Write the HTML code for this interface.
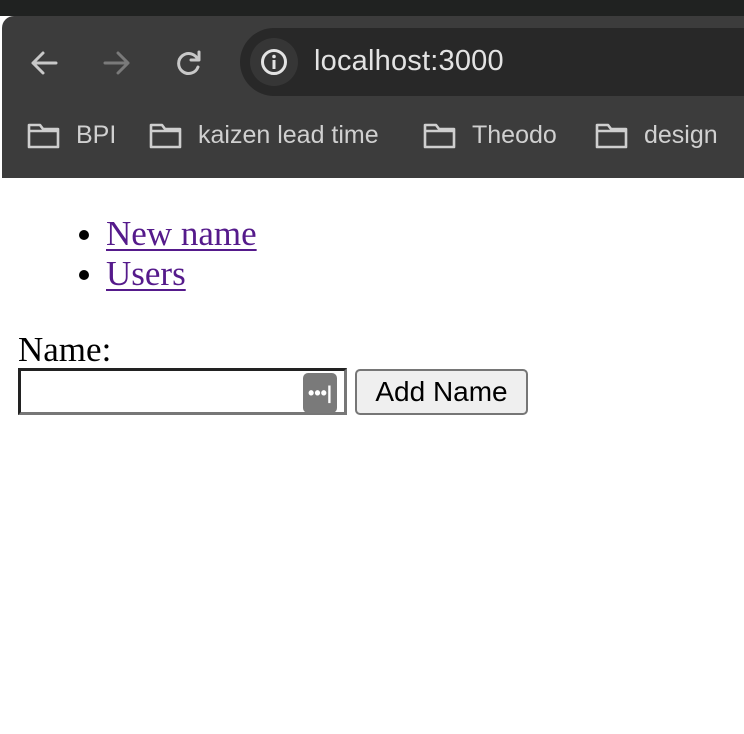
<!DOCTYPE html>
<html><head><meta charset="utf-8"><style>
*{margin:0;padding:0;box-sizing:border-box}
body{width:744px;height:734px;background:#fff;position:relative;overflow:hidden;font-family:"Liberation Serif",serif}
.top{position:absolute;left:0;top:0;width:744px;height:16px;background:#202221}
.bar{position:absolute;left:2px;top:16px;width:760px;height:162px;background:#3c3c3c;border-top-left-radius:12px}
.addr{position:absolute;left:240px;top:28px;width:600px;height:68px;background:#282828;border-radius:34px}
.info{position:absolute;left:250px;top:38px;width:48px;height:48px;border-radius:50%;background:#363636}
.url{position:absolute;left:314px;top:45px;font:29px "Liberation Sans",sans-serif;color:#e3e3e3;letter-spacing:0.2px}
.bm{position:absolute;top:121px;font:25px "Liberation Sans",sans-serif;color:#d0d0d0}
.f{position:absolute;top:122px}
ul{position:absolute;left:106px;top:214px;font-size:35px;line-height:40px}
li a{color:#551a8b;text-decoration:underline;text-decoration-thickness:2px;text-underline-offset:4px}
.lab{position:absolute;left:18px;top:330px;font-size:35px;line-height:40px}
.inp{position:absolute;left:18px;top:368px;width:329px;height:47px;border:3px solid;border-color:#222 #777 #777 #222;background:#fff}
.dots{position:absolute;left:282px;top:2px;width:34px;height:40px;background:#7a7a7a;border-radius:5px;color:#fff;font:bold 18px "Liberation Sans",sans-serif;text-align:center;line-height:40px}
.btn{position:absolute;left:355px;top:369px;width:173px;height:46px;border:2px solid #767676;border-radius:5px;background:#efefef;font:28px "Liberation Sans",sans-serif;text-align:center;line-height:42px;color:#000}
</style></head><body>
<div class="top"></div>
<div class="bar"></div>
<svg style="position:absolute;left:28px;top:46px" width="34" height="34" viewBox="0 0 34 34" fill="none" stroke="#c8c8c8" stroke-width="3" stroke-linecap="round" stroke-linejoin="round"><path d="M28 17H5M15 7L5 17l10 10"/></svg>
<svg style="position:absolute;left:99px;top:46px" width="34" height="34" viewBox="0 0 34 34" fill="none" stroke="#7a7a7a" stroke-width="3" stroke-linecap="round" stroke-linejoin="round"><path d="M6 17h23M19 7l10 10-10 10"/></svg>
<svg style="position:absolute;left:172px;top:46px" width="34" height="34" viewBox="0 0 34 34" fill="none" stroke="#c8c8c8" stroke-width="3" stroke-linecap="round" stroke-linejoin="round"><path d="M26 14A10 10 0 1 0 26 21"/><path d="M27 6v8h-8" /></svg>
<div class="addr"></div>
<div class="info"></div>
<svg style="position:absolute;left:260px;top:48px" width="28" height="28" viewBox="0 0 28 28"><circle cx="14" cy="14" r="11.5" fill="none" stroke="#e3e3e3" stroke-width="3"/><rect x="12.5" y="12" width="3" height="9" fill="#e3e3e3"/><circle cx="14" cy="8.5" r="1.8" fill="#e3e3e3"/></svg>
<div class="url">localhost:3000</div>
<svg class="f" style="left:27px" width="34" height="28" viewBox="0 0 34 28" fill="none" stroke="#cfcfcf" stroke-width="2.6" stroke-linejoin="round"><path d="M2 3h11l3 4h15v18H2z"/><path d="M2 9h29"/></svg>
<div class="bm" style="left:76px">BPI</div>
<svg class="f" style="left:149px" width="34" height="28" viewBox="0 0 34 28" fill="none" stroke="#cfcfcf" stroke-width="2.6" stroke-linejoin="round"><path d="M2 3h11l3 4h15v18H2z"/><path d="M2 9h29"/></svg>
<div class="bm" style="left:198px">kaizen lead time</div>
<svg class="f" style="left:423px" width="34" height="28" viewBox="0 0 34 28" fill="none" stroke="#cfcfcf" stroke-width="2.6" stroke-linejoin="round"><path d="M2 3h11l3 4h15v18H2z"/><path d="M2 9h29"/></svg>
<div class="bm" style="left:472px">Theodo</div>
<svg class="f" style="left:595px" width="34" height="28" viewBox="0 0 34 28" fill="none" stroke="#cfcfcf" stroke-width="2.6" stroke-linejoin="round"><path d="M2 3h11l3 4h15v18H2z"/><path d="M2 9h29"/></svg>
<div class="bm" style="left:644px">design</div>
<ul><li><a>New name</a></li><li><a>Users</a></li></ul>
<div class="lab">Name:</div>
<div class="inp"><div class="dots">•••|</div></div>
<div class="btn">Add Name</div>
</body></html>
